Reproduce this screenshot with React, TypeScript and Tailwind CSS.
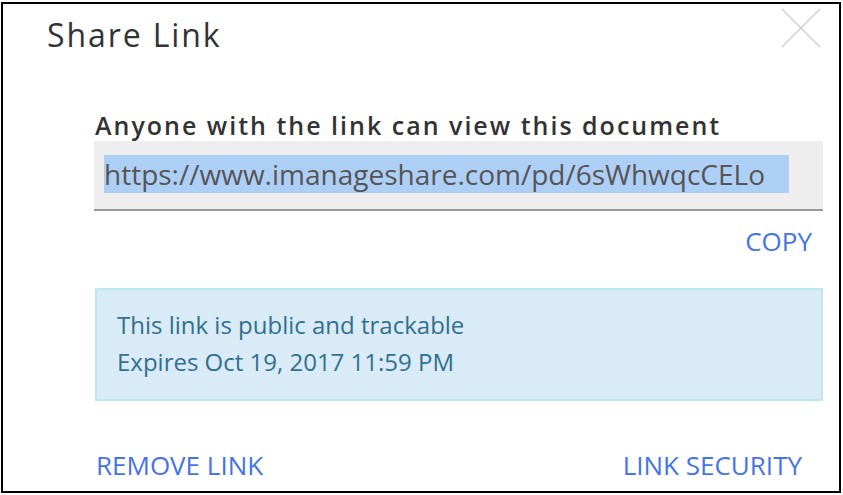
import { useState } from "react"

const url = "https://www.imanageshare.com/pd/6sWhwqcCELo"

function CloseIcon() {
  return (
    <svg width="40" height="40" viewBox="0 0 40 40" fill="none">
      <path d="M1 1L39 39M39 1L1 39" stroke="#d0d0d0" strokeWidth="1.5" />
    </svg>
  )
}

export default function App() {
  const [copied, setCopied] = useState(false)

  return (
    <div className="pt-[2px] pl-px bg-white" style={{ fontFamily: '"Open Sans", "Liberation Sans", sans-serif' }}>
      <div className="relative w-[840px] h-[491px] border-2 border-black bg-white">
        <button className="absolute top-[4px] right-[18px]" aria-label="Close">
          <CloseIcon />
        </button>

        <h1 className="pt-[15px] pl-[44px] text-[32px] leading-none tracking-[1.9px] text-[#333] font-normal">
          Share Link
        </h1>

        <div className="ml-[91px] w-[729px] mt-[62px]">
          <p className="text-[25px] leading-none font-semibold tracking-[2px] text-[#333] pl-px">
            Anyone with the link can view this document
          </p>

          <div className="mt-[3px] bg-[#eeeeee] border-b-2 border-[#999] pt-[14px] pb-[16px] pl-[10px] h-[70px]">
            <span className="text-[28px] leading-[normal] text-[#555] bg-[#aecff5] pr-[24px] whitespace-nowrap">
              {url}
            </span>
          </div>

          <div className="flex justify-end pr-[11px] mt-[17px]">
            <button
              onClick={() => setCopied(true)}
              className="text-[26px] leading-none text-[#4574e8]"
            >
              {copied ? "COPY" : "COPY"}
            </button>
          </div>

          <div className="mt-[34px] ml-px border-2 border-[#bce8f1] bg-[#d9ebf6] pt-[17px] pb-[19px] pl-[20px] text-[24px] leading-[36.5px] text-[#31708f]">
            <div>This link is public and trackable</div>
            <div>Expires Oct 19, 2017 11:59 PM</div>
          </div>

          <div className="mt-[51px] flex justify-between pl-[2px] pr-[21px] text-[26px] leading-none text-[#4574e8]">
            <button>REMOVE LINK</button>
            <button>LINK SECURITY</button>
          </div>
        </div>
      </div>
    </div>
  )
}
